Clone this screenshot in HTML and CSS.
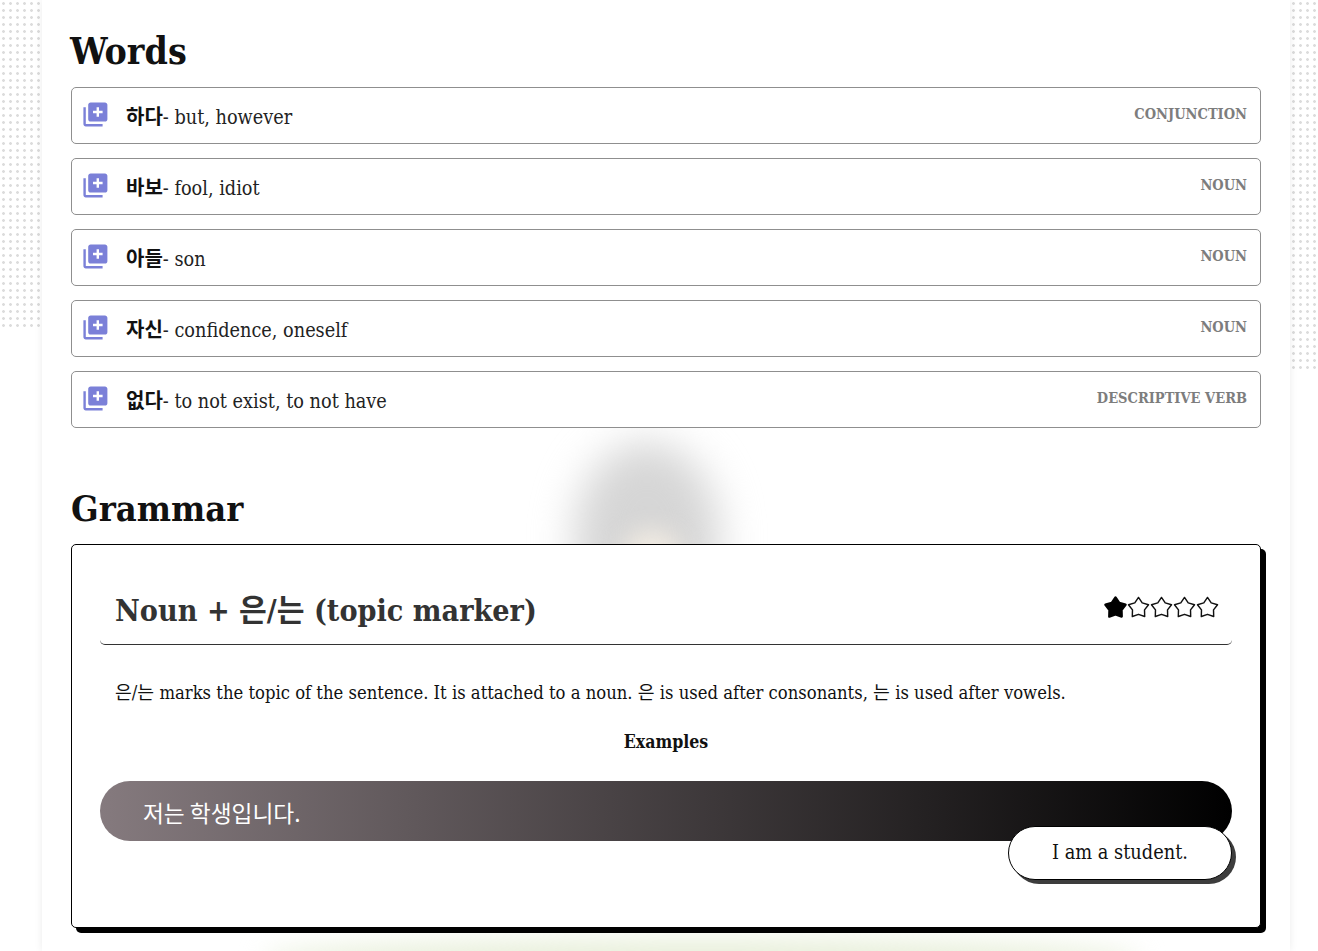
FILE: index.html
```html
<!DOCTYPE html>
<html lang="en">
<head>
<meta charset="utf-8">
<title>Lesson</title>
<link rel="stylesheet" href="styles.css">
</head>
<body>
<svg class="defs" aria-hidden="true">
  <symbol id="add" viewBox="0 0 24 24"><path d="M4 6H2v14c0 1.100.9 2 2 2h14v-2H4V6zm16-4H8c-1.100 0-2 .9-2 2v12c0 1.100.9 2 2 2h12c1.100 0 2-.9 2-2V4c0-1.100-.9-2-2-2zm-2 9h-3v3h-2v-3h-3V9h3V6h2v3h3v2z"/></symbol>
  <symbol id="star" viewBox="0 0 24 24"><path d="M12 1.500L15.880 7.160 22.460 9.100 18.280 14.540 18.470 21.400 12 19.100 5.530 21.400 5.720 14.540 1.540 9.100 8.120 7.160z"/></symbol>
</svg>
<div class="dots dots-left"></div>
<div class="dots dots-right"></div>
<main class="page">
  <div class="blob"></div>
  <div class="blob-warm"></div>
  <div class="glow"></div>
  <h2 class="heading heading-words">Words</h2>
  <ul class="words">
    <li class="word"><svg class="add"><use href="#add"/></svg><p class="word-text"><b>하다</b>- but, however</p><span class="pos">CONJUNCTION</span></li>
    <li class="word"><svg class="add"><use href="#add"/></svg><p class="word-text"><b>바보</b>- fool, idiot</p><span class="pos">NOUN</span></li>
    <li class="word"><svg class="add"><use href="#add"/></svg><p class="word-text"><b>아들</b>- son</p><span class="pos">NOUN</span></li>
    <li class="word"><svg class="add"><use href="#add"/></svg><p class="word-text"><b>자신</b>- confidence, oneself</p><span class="pos">NOUN</span></li>
    <li class="word"><svg class="add"><use href="#add"/></svg><p class="word-text"><b>없다</b>- to not exist, to not have</p><span class="pos">DESCRIPTIVE VERB</span></li>
  </ul>
  <h2 class="heading heading-grammar">Grammar</h2>
  <section class="card">
    <header class="card-head">
      <h3 class="card-title">Noun + 은/는 (topic marker)</h3>
      <div class="stars">
        <svg class="star star-on"><use href="#star"/></svg>
        <svg class="star"><use href="#star"/></svg>
        <svg class="star"><use href="#star"/></svg>
        <svg class="star"><use href="#star"/></svg>
        <svg class="star"><use href="#star"/></svg>
      </div>
    </header>
    <p class="explain">은/는 marks the topic of the sentence. It is attached to a noun. 은 is used after consonants, 는 is used after vowels.</p>
    <p class="examples">Examples</p>
    <div class="bubble-ko">저는 학생입니다.</div>
    <div class="bubble-en">I am a student.</div>
  </section>
</main>
</body>
</html>
```
FILE: styles.css
```css
* { box-sizing: border-box; }
html, body { margin: 0; height: 951px; overflow: hidden; background: #fff; }
body {
  position: relative;
  font-family: "DejaVu Serif Condensed", "DejaVu Serif", "Noto Sans CJK KR", serif;
  color: #111;
}
.defs { position: absolute; width: 0; height: 0; }
.dots {
  position: absolute;
  top: 0;
  background-image: radial-gradient(circle, #dcdcdc 1px, transparent 1.7px);
  background-size: 7px 7px;
}
.dots-left { left: 0; width: 42px; height: 328px; }
.dots-right { left: 1290px; width: 28px; height: 373px; }
.page {
  position: relative;
  width: 1248px;
  height: 951px;
  margin-left: 42px;
  padding: 0 29px;
  background: #fff;
  box-shadow: 0 0 8px rgba(0, 0, 0, 0.08);
  overflow: hidden;
}
.blob {
  position: absolute;
  left: 532px;
  top: 442px;
  width: 146px;
  height: 190px;
  border-radius: 50%;
  background: #d6d6d6;
  filter: blur(20px);
}
.blob-warm {
  position: absolute;
  left: 580px;
  top: 530px;
  width: 60px;
  height: 50px;
  border-radius: 50%;
  background: #f1ebe2;
  filter: blur(12px);
}
.glow {
  position: absolute;
  left: 220px;
  top: 938px;
  width: 880px;
  height: 40px;
  border-radius: 50%;
  background: #e9f0dc;
  filter: blur(12px);
}
.heading {
  position: relative;
  margin: 0;
  line-height: 44px;
  font-weight: 700;
  color: #111;
}
.heading-words { font-size: 37.200px; padding-top: 29px; height: 87px; margin-left: -1px; }
.heading-grammar { font-size: 36px; height: 58px; margin-top: 58px; }
.words { position: relative; list-style: none; margin: 0; padding: 0; display: flex; flex-direction: column; gap: 14px; }
.word {
  height: 57px;
  display: flex;
  align-items: center;
  padding: 0 13px 0 9px;
  background: #fff;
  border: 1px solid #8f8f8f;
  border-radius: 5px;
}
.add { width: 28.800px; height: 28.800px; fill: #7b80d8; flex: none; margin-right: 16.200px; margin-top: -2px; }
.word-text { margin: 3px 0 0; flex: 1; font-size: 19.700px; line-height: 24px; color: #222; }
.word-text b { color: #111; font-size: 20px; }
.pos { font-size: 14.500px; font-weight: 700; color: #7d7d7d; margin-top: -4px; }
.card {
  position: relative;
  display: flex;
  flex-direction: column;
  height: 384px;
  padding: 0 28px;
  background: #fff;
  border: 1px solid #000;
  border-radius: 5px;
  box-shadow: 5px 5px 0 #000;
}
.card-head {
  display: flex;
  justify-content: space-between;
  align-items: center;
  height: 100px;
  padding: 32px 13px 0 15px;
  border-bottom: 1px solid #333;
  border-radius: 0 0 5px 5px;
}
.card-title { margin: 0; font-size: 30.200px; line-height: 38px; font-weight: 700; color: #333; }
.stars { display: flex; margin-top: -6px; }
.star { width: 23px; height: 23px; fill: #fff; stroke: #111; stroke-width: 1.500; stroke-linejoin: round; }
.star-on { fill: #000; stroke: #000; stroke-width: 2.500; }
.explain { margin: 35px 0 0 15px; font-size: 18.300px; line-height: 26px; color: #111; }
.examples { margin: 23px 0 0; text-align: center; font-size: 17.600px; line-height: 26px; font-weight: 700; }
.bubble-ko {
  margin-top: 26px;
  height: 60px;
  padding: 2px 43px 0;
  display: flex;
  align-items: center;
  border-radius: 30px;
  background: linear-gradient(90deg, #857a7e 0%, #000 100%);
  color: #fff;
  font-family: "Noto Sans CJK KR", sans-serif;
  font-size: 22.700px;
  font-weight: 400;
}
.bubble-en {
  align-self: flex-end;
  position: relative;
  margin-top: -15px;
  width: 224px;
  height: 54px;
  padding-bottom: 2px;
  display: flex;
  align-items: center;
  justify-content: center;
  background: #fff;
  border: 1px solid #000;
  border-radius: 27px;
  box-shadow: 4px 4px 0 #3d3d3d;
  font-size: 19.800px;
}
```
